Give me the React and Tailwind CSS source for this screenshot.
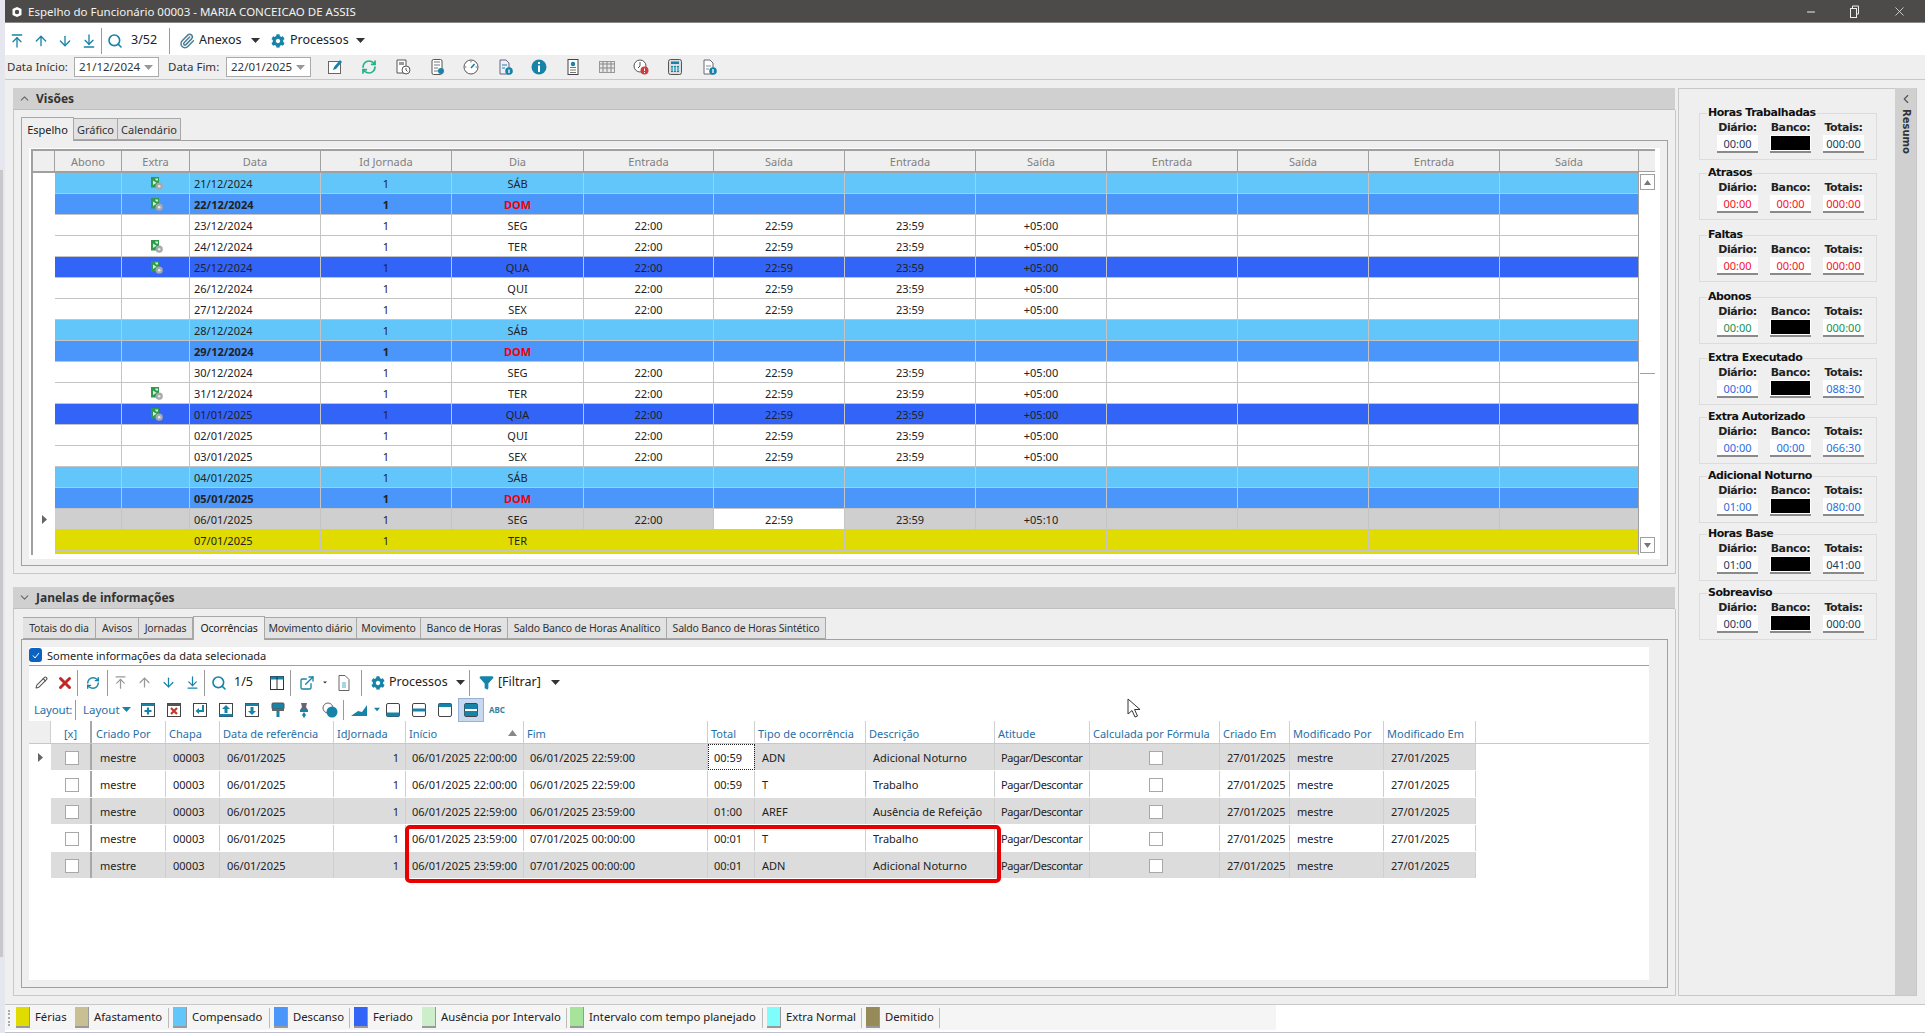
import React from "react";
import { ArrowUp, ArrowDown, ArrowUpToLine, ArrowDownToLine, Search, Paperclip, RefreshCw, ChevronUp, ChevronDown, ChevronLeft, X, Minus, Pencil, Funnel, ExternalLink } from "lucide-react";
import { FaCog } from "react-icons/fa";

const T = "#1883a8";
const Caret = ({ c = "#333" }) => (
  <svg width="9" height="5" viewBox="0 0 9 5"><path d="M0 0h9L4.5 5z" fill={c} /></svg>
);
const Sep = ({ h = "h-[26px]" }) => <div className={`w-px ${h} bg-[#9a9a9a]`} />;
const S = ({ w = "w-[24px]", children }) => <div className={`${w} flex justify-center items-center shrink-0`}>{children}</div>;

const I = ({ children, s = 18 }) => <svg width={s} height={s} viewBox="0 0 18 18" fill="none">{children}</svg>;
const Ico = {
  edit: <I><rect x="2.5" y="3.5" width="12" height="12" stroke="#666" fill="#fff" /><path d="M7 12l1-3 6-7 2 2-6 7z" fill="#1883a8" /></I>,
  sync: <RefreshCw size={16} color="#22b38c" strokeWidth={2.6} />,
  docClock: <I><path d="M3 2h9v13H3z" stroke="#555" fill="#fff" /><rect x="5" y="4" width="5" height="3" fill="#999" /><circle cx="12" cy="12" r="4" fill="#fff" stroke="#555" /><path d="M12 10v2l1.5 1.5" stroke="#555" /></I>,
  calcDoc: <I><rect x="4" y="1.5" width="10" height="15" rx="1.5" stroke="#555" fill="#fff" /><path d="M6 4h6M6 7h6M6 10h4M6 13h4" stroke="#777" /><circle cx="13" cy="13" r="3" fill="#1883a8" /></I>,
  dial: <I><circle cx="9" cy="9" r="7" stroke="#555" fill="#fff" /><path d="M9 10l3.5-4" stroke={T} strokeWidth="1.6" /><path d="M9 3v1.5M3 9h1.5M15 9h-1.5" stroke="#777" /></I>,
  docInfo: <I><path d="M4 2h6l3 3v11H4z" stroke="#667" fill="#eef" /><path d="M6 7h5M6 10h3" stroke={T} /><circle cx="13" cy="13" r="3.8" fill={T} /><path d="M13 11.5v3.5" stroke="#fff" strokeWidth="1.3" /></I>,
  info: <I><circle cx="9" cy="9" r="7.5" fill={T} /><rect x="8" y="7.5" width="2" height="6.5" fill="#fff" /><rect x="8" y="4" width="2" height="2" fill="#fff" /></I>,
  badge: <I><rect x="4" y="1.5" width="10" height="15" stroke="#444" fill="#fff" /><circle cx="9" cy="6" r="2.2" fill={T} /><path d="M6 9.5h6M6 12h6M6 14.5h6" stroke="#777" /></I>,
  cal: <I><rect x="1.5" y="3.5" width="15" height="11" stroke="#999" fill="#e8e8e8" /><path d="M1.5 6h15M5 3.5v11M9 3.5v11M13 3.5v11M1.5 10h15" stroke="#888" /></I>,
  clockAlert: <I><circle cx="8" cy="8" r="6" stroke="#555" fill="#fff" /><path d="M8 4v4l-2 2" stroke="#555" /><circle cx="12.5" cy="12.5" r="4" fill="#d23b3b" /><path d="M12.5 10.5v2.5M12.5 14v1" stroke="#fff" /></I>,
  calc: <I><rect x="2.5" y="1.5" width="13" height="15" rx="2" stroke="#555" fill="#ddd" /><rect x="5" y="3.5" width="8" height="2.5" fill={T} /><path d="M5 8h8v6H5z" fill={T} /><path d="M5 10h8M5 12h8M7.5 8v6M10.5 8v6" stroke="#fff" strokeWidth=".7" /></I>,
  docI2: <I><path d="M4 2h6l3 3v11H4z" stroke="#667" fill="#fff" /><path d="M6 8h5M6 11h3" stroke="#888" /><circle cx="13" cy="13" r="3.8" fill={T} /><path d="M13 11v4" stroke="#fff" strokeWidth="1.3" /></I>,
  columns: <I><rect x="2.5" y="2.5" width="13" height="13" stroke="#333" fill="#fff" /><rect x="2.5" y="2.5" width="13" height="3" fill={T} /><path d="M9 2.5v13" stroke="#333" /></I>,
  doc: <I><path d="M4 1.5h6l4 4v11H4z" stroke="#666" fill="#fff" /><rect x="7" y="8" width="4" height="6" fill="#a8d4e0" /></I>,
  boxPlus: <I><rect x="2.5" y="2.5" width="13" height="13" stroke="#444" fill="#fff" /><rect x="2.5" y="2.5" width="13" height="2.5" fill={T} /><path d="M9 6.5v7M5.5 10h7" stroke={T} strokeWidth="2.2" /></I>,
  boxX: <I><rect x="2.5" y="2.5" width="13" height="13" stroke="#444" fill="#fff" /><rect x="2.5" y="2.5" width="13" height="2.5" fill="#555" /><path d="M6 7l6 6M12 7l-6 6" stroke="#c0392b" strokeWidth="2.2" /></I>,
  boxEnter: <I><rect x="2.5" y="2.5" width="13" height="13" stroke="#444" fill="#fff" /><path d="M12 4v6H7" stroke={T} strokeWidth="2" /><path d="M8 7l-3.5 3L8 13z" fill={T} /></I>,
  boxUp: <I><rect x="2.5" y="2.5" width="13" height="13" stroke="#444" fill="#fff" /><rect x="2.5" y="13" width="13" height="2.5" fill={T} /><path d="M9 4l4 4h-2.5v4h-3V8H5z" fill={T} /></I>,
  boxDown: <I><rect x="2.5" y="2.5" width="13" height="13" stroke="#444" fill="#fff" /><rect x="2.5" y="2.5" width="13" height="2.5" fill={T} /><path d="M9 14l4-4h-2.5V6h-3v4H5z" fill={T} /></I>,
  brush: <I><rect x="3" y="2" width="12" height="6" rx="1" fill={T} stroke="#555" /><rect x="3" y="8" width="12" height="2" fill="#666" /><rect x="7.5" y="10" width="3" height="6" fill={T} /></I>,
  pin: <I><path d="M6 2h6l-1 4 2 3H5l2-3z" fill="#667" /><rect x="5" y="9" width="8" height="2" fill={T} /><path d="M9 11l-2 3 2 3 2-3z" fill={T} /></I>,
  circles: <I><circle cx="7" cy="7" r="5" stroke="#666" fill="#fff" /><circle cx="11" cy="11" r="5.5" fill={T} /></I>,
  chart: <I><path d="M1 15l7-5 4 1 5-7v11z" fill={T} /></I>,
  pBottom: <I><rect x="2.5" y="2.5" width="13" height="13" rx="1.5" stroke="#444" fill="#fff" /><rect x="2.5" y="11.5" width="13" height="4" fill={T} /></I>,
  pMid: <I><rect x="2.5" y="2.5" width="13" height="13" rx="1.5" stroke="#444" fill="#fff" /><rect x="2.5" y="7.5" width="13" height="3" fill={T} /></I>,
  pTop: <I><rect x="2.5" y="2.5" width="13" height="13" rx="1.5" stroke="#444" fill="#fff" /><rect x="2.5" y="2.5" width="13" height="3.5" fill={T} /></I>,
  pBoth: <I><rect x="2.5" y="2.5" width="13" height="13" rx="1.5" stroke="#444" fill="#fff" /><rect x="2.5" y="3" width="13" height="5" fill={T} /><rect x="2.5" y="10" width="13" height="5" fill={T} /></I>,
};

const Extra = () => (
  <svg className="ml-[3px]" width="12" height="13" viewBox="0 0 12 13">
    <rect x="0" y="0" width="8" height="10.5" fill="#2f9a4c" />
    <path d="M2 3.5l3.5 2.2L2 8zM4 1.5h3v2H5z" fill="#d8f0dc" />
    <circle cx="8.2" cy="9.2" r="3.6" fill="#a4a9ae" />
    <circle cx="8.2" cy="9.2" r="1.3" fill="#e8e8e8" />
  </svg>
);

const rows = [
  ["21/12/2024", "SÁB", "l", 0, 1], ["22/12/2024", "DOM", "d", 0, 1], ["23/12/2024", "SEG", "w", 1, 0],
  ["24/12/2024", "TER", "w", 1, 1], ["25/12/2024", "QUA", "f", 1, 1], ["26/12/2024", "QUI", "w", 1, 0],
  ["27/12/2024", "SEX", "w", 1, 0], ["28/12/2024", "SÁB", "l", 0, 0], ["29/12/2024", "DOM", "d", 0, 0],
  ["30/12/2024", "SEG", "w", 1, 0], ["31/12/2024", "TER", "w", 1, 1], ["01/01/2025", "QUA", "f", 1, 1],
  ["02/01/2025", "QUI", "w", 1, 0], ["03/01/2025", "SEX", "w", 1, 0], ["04/01/2025", "SÁB", "l", 0, 0],
  ["05/01/2025", "DOM", "d", 0, 0], ["06/01/2025", "SEG", "g", 2, 0], ["07/01/2025", "TER", "y", 0, 0],
];
const bg = { l: "bg-[#62c6fb]", d: "bg-[#4a96fb]", w: "bg-white", f: "bg-[#3264f8]", g: "bg-[#cfcfcf]", y: "bg-[#e0dc00]" };
const cols1 = "grid grid-cols-[67px_68px_131px_131px_132px_130px_131px_131px_131px_131px_131px_131px_139px]";
const c1 = "border-r border-[#c4c4c4] flex items-center justify-center overflow-hidden";

function Espelho() {
  const heads = ["Abono", "Extra", "Data", "Id Jornada", "Dia", "Entrada", "Saída", "Entrada", "Saída", "Entrada", "Saída", "Entrada", "Saída"];
  return (
    <div className="w-[1624px] h-[406px] border-t-2 border-l-2 border-[#a0a0a0] flex flex-col overflow-hidden">
      <div className="flex h-[22px] shrink-0 bg-[#efefef] border-b-2 border-[#a0a0a0] text-[#808080]">
        <div className="w-[22px] shrink-0 border-r border-[#a0a0a0]" />
        <div className={cols1}>
          {heads.map((h, i) => <div key={i} className="border-r border-[#a0a0a0] flex items-center justify-center">{h}</div>)}
        </div>
      </div>
      <div className="flex flex-1 min-h-0">
        <div className="w-[22px] shrink-0 bg-white flex flex-col">
          <div className="h-[336px]" />
          <div className="h-[21px] flex items-center justify-center">
            <svg width="5" height="9" viewBox="0 0 5 9"><path d="M0 0l5 4.5L0 9z" fill="#666" /></svg>
          </div>
        </div>
        <div className="flex-1 min-w-0 flex flex-col text-[#222]">
          {rows.map((r) => {
            const sun = r[2] === "d";
            return (
              <div key={r[0]} className={`${cols1} h-[21px] shrink-0 border-b border-[#c4c4c4] ${bg[r[2]]} ${sun ? "font-bold" : ""}`}>
                <div className={c1} />
                <div className={c1}>{r[4] ? <Extra /> : null}</div>
                <div className={`${c1} !justify-start pl-[4px]`}>{r[0]}</div>
                <div className={c1}>1</div>
                <div className={`${c1} ${sun ? "text-[#f00000]" : ""}`}>{r[1]}</div>
                <div className={c1}>{r[3] ? "22:00" : ""}</div>
                <div className={`${c1} ${r[3] === 2 ? "bg-white" : ""}`}>{r[3] ? "22:59" : ""}</div>
                <div className={c1}>{r[3] ? "23:59" : ""}</div>
                <div className={c1}>{r[3] === 2 ? "+05:10" : r[3] ? "+05:00" : ""}</div>
                <div className={c1} /><div className={c1} /><div className={c1} /><div className={c1} />
              </div>
            );
          })}
          <div className="h-[3px] bg-[#e0dc00]" />
        </div>
        <div className="w-[17px] shrink-0 bg-white flex flex-col items-center border-l border-[#a0a0a0] -mt-px">
          <div className="w-[15px] h-[16px] mt-[2px] border border-[#a0a0a0] flex items-center justify-center">
            <svg width="7" height="5" viewBox="0 0 7 5"><path d="M3.5 0L7 5H0z" fill="#777" /></svg>
          </div>
          <div className="w-[15px] h-[184px] bg-white border-b border-[#a0a0a0]" />
          <div className="flex-1" />
          <div className="w-[15px] h-[16px] mb-[2px] border border-[#a0a0a0] flex items-center justify-center">
            <svg width="7" height="5" viewBox="0 0 7 5"><path d="M0 0h7L3.5 5z" fill="#777" /></svg>
          </div>
        </div>
      </div>
    </div>
  );
}

const gc = "grid grid-cols-[22px_41px_74px_54px_114px_72px_118px_184px_47px_111px_129px_95px_130px_70px_94px_92px]";
const occ = [
  ["06/01/2025 22:00:00", "06/01/2025 22:59:00", "00:59", "ADN", "Adicional Noturno"],
  ["06/01/2025 22:00:00", "06/01/2025 22:59:00", "00:59", "T", "Trabalho"],
  ["06/01/2025 22:59:00", "06/01/2025 23:59:00", "01:00", "AREF", "Ausência de Refeição"],
  ["06/01/2025 23:59:00", "07/01/2025 00:00:00", "00:01", "T", "Trabalho"],
  ["06/01/2025 23:59:00", "07/01/2025 00:00:00", "00:01", "ADN", "Adicional Noturno"],
];
const cc = "border-r border-[#cfcfcf] flex items-center overflow-hidden whitespace-nowrap";
const Box = () => <div className="w-[14px] h-[14px] ml-[2px] mt-[1px] bg-white border border-[#a8a8a8]" />;

function Occ() {
  const heads = ["Chapa", "Data de referência", "IdJornada", "Início", "Fim", "Total", "Tipo de ocorrência", "Descrição", "Atitude", "Calculada por Fórmula", "Criado Em", "Modificado Por", "Modificado Em"];
  return (
    <div className="flex flex-col">
      <div className="border-b border-[#c8c8c8] h-[23px]">
        <div className={`${gc} w-[1447px] h-[22px] text-[#1f6fa8]`}>
          <div className="bg-[#efefef] border-r border-[#cfcfcf]" />
          <div className="border-r-2 border-[#a8a8a8] flex items-center justify-center pt-[2px]">[x]</div>
          <div className={`${cc} pl-[4px] pt-[2px]`}>Criado Por</div>
          {heads.map((h) => (
            <div key={h} className={`${cc} pl-[3px] pt-[2px] ${h === "Início" ? "justify-between pr-[6px]" : ""}`}>
              {h}
              {h === "Início" ? <svg width="9" height="6" viewBox="0 0 9 6"><path d="M4.5 0L9 6H0z" fill="#888" /></svg> : null}
            </div>
          ))}
        </div>
      </div>
      {occ.map((r, i) => (
        <div key={i} className={`${gc} w-[1447px] h-[27px] border-b border-white text-[#222] ${i % 2 === 0 ? "bg-[#dcdcdc]" : "bg-white"}`}>
          <div className="bg-white flex items-center justify-center">
            {i === 0 ? <svg width="5" height="9" viewBox="0 0 5 9"><path d="M0 0l5 4.5L0 9z" fill="#666" /></svg> : null}
          </div>
          <div className="border-r-2 border-[#a8a8a8] flex items-center justify-center"><Box /></div>
          <div className={`${cc} pl-[8px]`}>mestre</div>
          <div className={`${cc} pl-[7px]`}>00003</div>
          <div className={`${cc} pl-[7px]`}>06/01/2025</div>
          <div className={`${cc} justify-end pr-[6px]`}>1</div>
          <div className={`${cc} pl-[6px]`}>{r[0]}</div>
          <div className={`${cc} pl-[6px]`}>{r[1]}</div>
          <div className={`${cc} pl-[6px] ${i === 0 ? "outline-1 outline-dotted -outline-offset-1 outline-[#222] bg-white" : ""}`}>{r[2]}</div>
          <div className={`${cc} pl-[7px]`}>{r[3]}</div>
          <div className={`${cc} pl-[7px]`}>{r[4]}</div>
          <div className={`${cc} pl-[6px] tracking-[-0.4px]`}>Pagar/Descontar</div>
          <div className={`${cc} justify-center`}><Box /></div>
          <div className={`${cc} pl-[7px]`}>27/01/2025</div>
          <div className={`${cc} pl-[7px]`}>mestre</div>
          <div className={`${cc} pl-[7px]`}>27/01/2025</div>
        </div>
      ))}
    </div>
  );
}

const groups = [
  ["Horas Trabalhadas", "mt-[24px]", "text-[#1a3a60]", "00:00", null, "000:00"],
  ["Atrasos", "mt-[13px]", "text-[#f5102a]", "00:00", "00:00", "000:00"],
  ["Faltas", "mt-[15px]", "text-[#f5102a]", "00:00", "00:00", "000:00"],
  ["Abonos", "mt-[15px]", "text-[#159050]", "00:00", null, "000:00"],
  ["Extra Executado", "mt-[14px]", "text-[#2a6ce0]", "00:00", null, "088:30"],
  ["Extra Autorizado", "mt-[12px]", "text-[#2a6ce0]", "00:00", "00:00", "066:30"],
  ["Adicional Noturno", "mt-[12px]", "text-[#2a6ce0]", "01:00", null, "080:00"],
  ["Horas Base", "mt-[11px]", "text-[#1a3a60]", "01:00", null, "041:00"],
  ["Sobreaviso", "mt-[12px]", "text-[#1a3a60]", "00:00", null, "000:00"],
];
const Val = ({ v, c }) =>
  v === null ? (
    <div className="w-[41px] h-[18px] bg-white border-b-2 border-[#8a8a8a] p-px"><div className="h-full bg-black" /></div>
  ) : (
    <div className={`w-[41px] h-[18px] bg-white border-b-2 border-[#8a8a8a] flex items-center justify-center ${c}`}>{v}</div>
  );

function Group({ g }) {
  return (
    <div className={`${g[1]} w-[178px] h-[47px] border border-[#dcdcdc] shrink-0`}>
      <div className="-mt-[9px] ml-[7px] w-fit h-[16px] px-px bg-[#efefef] font-bold text-[#111] leading-[16px] text-[11px] font-['DejaVu_Sans'] tracking-[-0.45px] whitespace-nowrap">{g[0]}</div>
      <div className="flex gap-[12px] pl-[17px] font-bold text-[#222] h-[13px] items-center text-[11px] font-['DejaVu_Sans'] tracking-[-0.4px]">
        <div className="w-[41px] text-center">Diário:</div>
        <div className="w-[41px] text-center">Banco:</div>
        <div className="w-[41px] text-center">Totais:</div>
      </div>
      <div className="flex gap-[12px] pl-[17px] pt-[1px]">
        <Val v={g[3]} c={g[2]} />
        <Val v={g[4]} c={g[2]} />
        <Val v={g[5]} c={g[2]} />
      </div>
    </div>
  );
}

const legend = [
  ["Férias", "bg-[#e0dc00]", "w-[59px]"], ["Afastamento", "bg-[#c8bf92]", "w-[98px]"], ["Compensado", "bg-[#62c6fb]", "w-[101px]"],
  ["Descanso", "bg-[#4a96fb]", "w-[80px]"], ["Feriado", "bg-[#3264f8]", "w-[68px]"], ["Ausência por Intervalo", "bg-[#cdeecb]", "w-[148px]"],
  ["Intervalo com tempo planejado", "bg-[#a6e39b]", "w-[197px]"], ["Extra Normal", "bg-[#7ffcfc]", "w-[99px]"], ["Demitido", "bg-[#968a58]", "w-[78px]"],
];

const SectionHead = ({ open, children }) => (
  <div className="h-[22px] w-[1662px] bg-[#d0d0d0] border-b border-[#c0c0c0] flex items-center pl-[5px] gap-[5px] shrink-0">
    {open ? <ChevronUp size={13} color="#666" /> : <ChevronDown size={13} color="#666" />}
    <span className="font-bold text-[#333] text-[12px]">{children}</span>
  </div>
);
const Tab = ({ w, active, children }) => (
  <div className={`${w} shrink-0 flex items-center justify-center whitespace-nowrap overflow-hidden border border-[#a8a8a8] ${active ? "h-[24px] bg-[#efefef] border-b-0 -mb-px relative z-10 text-[#222]" : "h-[22px] bg-[#e2e2e2] border-l-0 text-[#333]"}`}>{children}</div>
);

export default function App() {
  return (
    <div className="relative w-[1925px] h-[1033px] overflow-hidden bg-white flex font-['Noto_Sans',sans-serif] text-[11px] leading-none">
      <div className="w-[5px] shrink-0 bg-[#e6e6ee] flex flex-col">
        <div className="h-[170px]" />
        <div className="w-[3px] h-[787px] bg-[#c8c8c8]" />
      </div>
      <div className="w-[1920px] flex flex-col">
        <div className="h-[23px] bg-[#4c4b49] border-b border-[#888] flex items-center text-[#f2f2f2] text-[11.5px] shrink-0 pt-[1px]">
          <div className="w-[23px] flex justify-center">
            <svg width="12" height="12" viewBox="0 0 12 12"><path d="M6 1l4.5 2v6L6 11 1.5 9V3z" fill="#fff" /><circle cx="6" cy="6" r="2.2" fill="#4c4b49" /></svg>
          </div>
          <span>Espelho do Funcionário 00003 - MARIA CONCEICAO DE ASSIS</span>
          <div className="ml-auto flex items-center gap-[32px] pr-[18px]">
            <Minus size={12} color="#eee" />
            <svg width="11" height="13" viewBox="0 0 11 13" fill="none"><rect x="1.5" y="3.5" width="6" height="9" stroke="#eee" /><path d="M3.5 3V1h6v8H8" stroke="#eee" /></svg>
            <X size={15} color="#eee" strokeWidth={1.2} />
          </div>
        </div>
        <div className="h-[32px] bg-white flex items-center text-[12.5px] text-[#222] shrink-0 pt-[3px]">
          <S><ArrowUpToLine size={16} color={T} /></S>
          <S><ArrowUp size={16} color={T} /></S>
          <S><ArrowDown size={16} color={T} /></S>
          <S><ArrowDownToLine size={16} color={T} /></S>
          <Sep />
          <S w="w-[26px]"><Search size={16} color={T} strokeWidth={2.4} /></S>
          <span className="w-[41px] pl-[3px]">3/52</span>
          <Sep />
          <div className="w-[4px] shrink-0" />
          <S w="w-[25px]"><Paperclip size={16} color="#4a7f95" strokeWidth={2.2} /></S>
          <span className="w-[49px]">Anexos</span>
          <S w="w-[14px]"><Caret /></S>
          <S w="w-[32px]"><FaCog size={14} color={T} /></S>
          <span className="w-[62px] ml-[-4px]">Processos</span>
          <S w="w-[16px]"><Caret /></S>
        </div>
        <div className="h-[25px] bg-[#efefef] border-b border-[#c8c8c8] flex items-center shrink-0 text-[#333] text-[11.5px] pl-[2px]">
          <span className="w-[67px] whitespace-nowrap">Data Início:</span>
          <div className="w-[85px] h-[20px] bg-white border border-[#aaa] flex items-center pl-[4px] justify-between pr-[5px]">21/12/2024<Caret c="#999" /></div>
          <span className="w-[67px] pl-[9px] whitespace-nowrap">Data Fim:</span>
          <div className="w-[85px] h-[20px] bg-white border border-[#aaa] flex items-center pl-[4px] justify-between pr-[5px]">22/01/2025<Caret c="#999" /></div>
          <div className="flex ml-[7px]">
            {["edit", "sync", "docClock", "calcDoc", "dial", "docInfo", "info", "badge", "cal", "clockAlert", "calc", "docI2"].map((k) => (
              <S key={k} w="w-[34px]">{Ico[k]}</S>
            ))}
          </div>
        </div>
        <div className="h-[924px] bg-[#efefef] flex pl-[8px] pt-[8px] shrink-0">
          <div className="w-[1663px] shrink-0 flex flex-col">
            <SectionHead open>Visões</SectionHead>
            <div className="h-[464px] w-[1663px] border-l border-r border-b border-[#c8c8c8] pl-[7px] pt-[7px] shrink-0">
              <div className="flex items-end h-[23px]">
                <Tab w="w-[53px]" active>Espelho</Tab>
                <Tab w="w-[44px]">Gráfico</Tab>
                <Tab w="w-[63px]">Calendário</Tab>
              </div>
              <div className="w-[1647px] h-[426px] border border-[#a0a0a0] p-[7px]">
                <div className="w-[1631px] h-[411px] bg-white pt-[1px] pl-[2px]"><Espelho /></div>
              </div>
            </div>
            <div className="h-[13px] shrink-0" />
            <SectionHead>Janelas de informações</SectionHead>
            <div className="h-[387px] w-[1663px] border-l border-r border-b border-[#c8c8c8] pl-[7px] pt-[7px] shrink-0">
              <div className="flex items-end h-[23px] pl-[2px] text-[10.5px] tracking-[-0.2px]">
                <Tab w="w-[73px]">Totais do dia</Tab>
                <Tab w="w-[43px]">Avisos</Tab>
                <Tab w="w-[54px]">Jornadas</Tab>
                <Tab w="w-[72px]" active>Ocorrências</Tab>
                <Tab w="w-[92px]">Movimento diário</Tab>
                <Tab w="w-[64px]">Movimento</Tab>
                <Tab w="w-[87px]">Banco de Horas</Tab>
                <Tab w="w-[159px]">Saldo Banco de Horas Analítico</Tab>
                <Tab w="w-[159px]">Saldo Banco de Horas Sintético</Tab>
              </div>
              <div className="w-[1647px] h-[349px] border border-[#a0a0a0] p-[7px]">
                <div className="w-[1620px] h-[333px] bg-white flex flex-col">
                  <div className="h-[19px] border-b border-[#a0a0a0] flex items-center gap-[5px] text-[#222] shrink-0 pb-[2px]">
                    <div className="w-[13px] h-[14px] rounded-[3px] bg-[#0b62c0] flex items-center justify-center">
                      <svg width="8" height="7" viewBox="0 0 8 7" fill="none"><path d="M1 3.5L3 6l4-5" stroke="#fff" /></svg>
                    </div>
                    Somente informações da data selecionada
                  </div>
                  <div className="h-[32px] flex items-center text-[#222] text-[12.5px] shrink-0 pt-[1px]">
                    <S><Pencil size={13} color="#555" /></S>
                    <S><X size={18} color="#c0282c" strokeWidth={4} /></S>
                    <Sep />
                    <S w="w-[29px]"><RefreshCw size={14} color={T} strokeWidth={2.4} /></S>
                    <Sep />
                    <S><ArrowUpToLine size={15} color="#999" /></S>
                    <S><ArrowUp size={15} color="#999" /></S>
                    <S><ArrowDown size={15} color={T} /></S>
                    <S><ArrowDownToLine size={15} color={T} /></S>
                    <Sep />
                    <S w="w-[28px]"><Search size={16} color={T} strokeWidth={2.4} /></S>
                    <span className="w-[31px] pl-[1px]">1/5</span>
                    <S w="w-[26px]">{Ico.columns}</S>
                    <Sep />
                    <S w="w-[32px]"><ExternalLink size={16} color={T} strokeWidth={2} /></S>
                    <S w="w-[4px]"><Caret /></S>
                    <S w="w-[34px]">{Ico.doc}</S>
                    <Sep />
                    <S w="w-[31px]"><FaCog size={14} color={T} /></S>
                    <span className="w-[66px] ml-[-4px]">Processos</span>
                    <S w="w-[10px]"><Caret /></S>
                    <div className="w-[4px]" />
                    <Sep />
                    <S w="w-[32px]"><Funnel size={15} color="#1883a8" fill="#1883a8" /></S>
                    <span className="w-[50px] ml-[-4px]">[Filtrar]</span>
                    <S w="w-[14px]"><Caret /></S>
                  </div>
                  <div className="h-[23px] flex items-center text-[#1f6fa8] text-[11.5px] shrink-0">
                    <span className="w-[46px] pl-[5px] tracking-[-0.2px]">Layout:</span>
                    <Sep h="h-[20px]" />
                    <span className="w-[45px] pl-[7px]">Layout</span>
                    <S w="w-[10px]"><Caret c={T} /></S>
                    <div className="w-[4px]" />
                    {["boxPlus", "boxX", "boxEnter", "boxUp", "boxDown", "brush", "pin", "circles"].map((k) => (
                      <S key={k} w="w-[26px]">{Ico[k]}</S>
                    ))}
                    <Sep h="h-[20px]" />
                    <S w="w-[30px]">{Ico.chart}</S>
                    <S w="w-[6px]"><Caret c={T} /></S>
                    <S w="w-[26px]">{Ico.pBottom}</S>
                    <S w="w-[26px]">{Ico.pMid}</S>
                    <S w="w-[26px]">{Ico.pTop}</S>
                    <div className="w-[26px] h-[24px] bg-[#c8d8f0] border border-[#9ab0d0] flex items-center justify-center">{Ico.pBoth}</div>
                    <span className="w-[26px] text-center font-bold text-[8px] text-[#3a7f9a]">ABC</span>
                  </div>
                  <Occ />
                </div>
              </div>
            </div>
          </div>
          <div className="w-[2px] shrink-0" />
          <div className="w-[239px] h-[908px] flex shrink-0">
            <div className="w-[217px] border border-[#c8c8c8] border-r-0 pl-[20px] flex flex-col">
              {groups.map((g) => <Group key={g[0]} g={g} />)}
            </div>
            <div className="w-[22px] bg-[#d0d0d0] border-r border-b border-[#c8c8c8] flex flex-col items-center pt-[4px]">
              <ChevronLeft size={14} color="#555" />
              <span className="[writing-mode:vertical-rl] font-bold text-[#333] mt-[3px] font-['DejaVu_Sans'] text-[10px]">Resumo</span>
            </div>
          </div>
        </div>
        <div className="h-[26px] border-t border-[#c8c8c8] flex shrink-0 bg-white">
          <div className="w-[1271px] h-full bg-[#f5f5f5] flex items-center pl-[3px] text-[#222] text-[11.3px]">
            <div className="w-[8px] h-[16px] border-l-2 border-dotted border-[#aaa]" />
            {legend.map((l) => (
              <div key={l[0]} className={`${l[2]} shrink-0 flex items-center h-full gap-[5px]`}>
                <div className={`w-[14px] h-[21px] ${l[1]} border-b-2 border-r border-[#999] shrink-0`} />
                <span className="whitespace-nowrap pb-[2px]">{l[0]}</span>
                <div className="ml-auto mr-[4px] w-px h-[20px] bg-[#bbb]" />
              </div>
            ))}
          </div>
        </div>
        <div className="h-[3px] bg-white border-b border-[#c0c0cc]" />
      </div>
      <div className="absolute left-[405px] top-[825px] w-[596px] h-[58px] border-[4px] border-[#e80000] rounded-[5px] pointer-events-none" />
      <svg className="absolute left-[1127px] top-[698px]" width="14" height="20" viewBox="0 0 14 20">
        <path d="M1 1v15l4-3.5L8 19l2.5-1-3-6.5H13z" fill="#fff" stroke="#333" />
      </svg>
    </div>
  );
}
